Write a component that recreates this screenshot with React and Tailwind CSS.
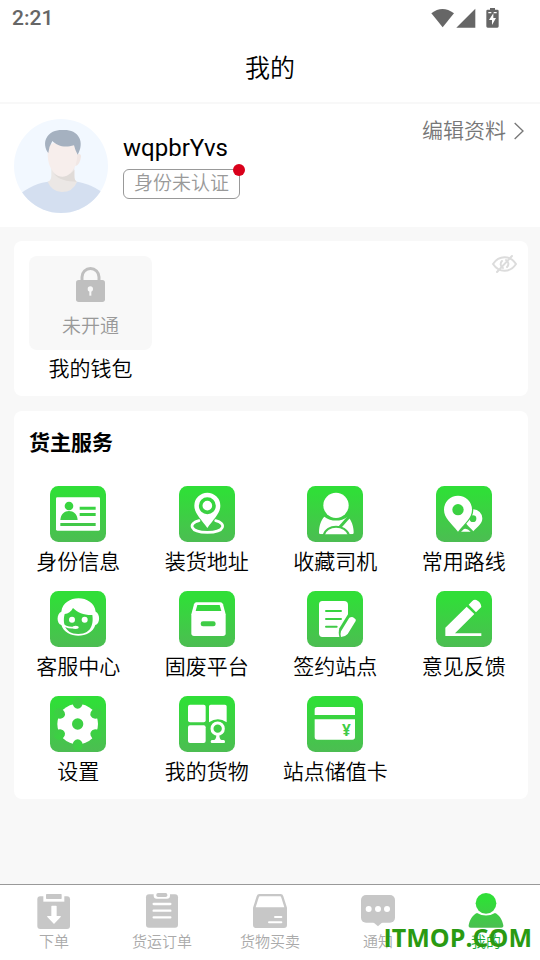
import { clsx } from "clsx";

const Tile = ({ children }) => (
  <svg viewBox="0 0 168 168" className="w-14 h-14" aria-hidden="true">
    <defs>
      <linearGradient id="green" gradientUnits="userSpaceOnUse" x1="0" y1="0" x2="0" y2="168">
        <stop offset="0.1" stopColor="#30de38" />
        <stop offset="1" stopColor="#4cbd52" />
      </linearGradient>
    </defs>
    <rect width="168" height="168" rx="25" fill="url(#green)" />
    {children}
  </svg>
);

const G = "url(#green)";

const IdCardIcon = () => (
  <Tile>
    <rect x="18" y="34" width="132" height="100" rx="4" fill="#fff" />
    <circle cx="57" cy="60" r="13" fill={G} />
    <path d="M31 102C32 84 44 75 57 75S82 84 83 102Z" fill={G} />
    <path d="M89 62h48v9H89zM89 81h48v9H89zM31 111h106v9H31z" fill={G} />
  </Tile>
);

const AddressIcon = () => (
  <Tile>
    <path d="M60 104C28 111 30 139 85 139S142 111 110 104" fill="none" stroke="#fff" strokeWidth="8" strokeLinecap="round" />
    <path d="M85 126C66 99 46 82 46 59a39 39 0 0 1 78 0C124 82 104 99 85 126Z" fill="#fff" />
    <circle cx="85" cy="59" r="20" fill="none" stroke={G} strokeWidth="11" />
  </Tile>
);

const DriverIcon = () => (
  <Tile>
    <path d="M36 140C36 119 42 102 52 92C72 107 101 108 122 92C134 102 140 122 140 140Q140 145 134 145H42Q36 145 36 140Z" fill="#fff" />
    <path d="M129 89L97 125" stroke={G} strokeWidth="9" />
    <path d="M50 148C58 114 116 114 126 148" fill="#fff" stroke={G} strokeWidth="6" />
    <path d="M30 145h115v10H30z" fill={G} />
    <circle cx="87" cy="58" r="42" fill={G} />
    <circle cx="87" cy="58" r="38" fill="#fff" />
  </Tile>
);

const RouteIcon = () => (
  <Tile>
    <path d="M112 136C100 121 85 114 85 97a27 27 0 0 1 54 0C139 114 125 121 112 136Z" fill="#fff" />
    <circle cx="111" cy="98" r="10" fill={G} />
    <path d="M66 142C46 113 20 98 20 71a46 46 0 0 1 92 0C112 98 88 113 66 142Z" fill={G} />
    <path d="M66 137C45 110 24 96 24 71a42 42 0 0 1 84 0C108 96 87 110 66 137Z" fill="#fff" />
    <circle cx="66" cy="71" r="17" fill={G} />
    <path d="M75 137L84 129Q93 126 104 137Z" fill="#fff" />
  </Tile>
);

const SupportIcon = () => (
  <Tile>
    <path d="M34 62C40 8 131 8 137 62C151 67 151 99 136 102C123 145 47 145 34 102C19 99 19 67 34 62Z" fill="#fff" />
    <path d="M69 51C83 65 103 73 127 72C130 91 129 129 85 129S38 91 44 69C55 69 63 62 69 51Z" fill={G} />
    <circle cx="66" cy="86" r="9" fill="#fff" />
    <circle cx="104" cy="86" r="9" fill="#fff" />
    <path d="M35 98C46 110 60 111 76 109" fill="none" stroke="#fff" strokeWidth="5" />
    <ellipse cx="77" cy="109" rx="9" ry="5" fill="#fff" />
  </Tile>
);

const BoxIcon = () => (
  <Tile>
    <path d="M52 34H124Q130 34 132 40L140 70V127Q140 135 132 135H45Q37 135 37 127V70L45 40Q47 34 52 34Z" fill="#fff" />
    <path d="M55 42H122L127 60H50Z" fill={G} />
    <rect x="65" y="91" width="45" height="15" rx="7" fill={G} />
  </Tile>
);

const SignIcon = () => (
  <Tile>
    <path d="M46 30H111Q123 30 123 42V138H46Q36 138 36 127V41Q36 30 46 30Z" fill="#fff" />
    <path d="M57 60h45M57 84h45M57 107h32" stroke={G} strokeWidth="6" strokeLinecap="round" />
    <path d="M124 68L97 112Q93 124 98 142H130L155 90Z" fill={G} />
    <path d="M131 79Q135 77 138 79L144 83Q148 86 146 90L122 129Q114 138 102 138Q99 130 102 121L126 82Q128 79 131 79Z" fill="#fff" />
  </Tile>
);

const FeedbackIcon = () => (
  <Tile>
    <path d="M28 110L92 47L115 69L57 127H136V135H28Z" fill="#fff" />
    <path d="M98 41L109 30Q114 25 121 27Q135 33 136 48L120 64Z" fill="#fff" />
  </Tile>
);

const GearIcon = () => (
  <Tile>
    <circle cx="83" cy="84" r="61" fill="#fff" />
    {[30, 90, 150, 210, 270, 330].map((deg) => (
      <ellipse key={deg} cx="146" cy="84" rx="17" ry="15" fill={G} transform={`rotate(${deg} 83 84)`} />
    ))}
    <circle cx="83" cy="84" r="17" fill={G} />
  </Tile>
);

const GoodsIcon = () => (
  <Tile>
    <rect x="27" y="26" width="53" height="53" rx="6" fill="#fff" />
    <rect x="27" y="88" width="53" height="53" rx="6" fill="#fff" />
    <path d="M95 26H138Q143 26 143 31V79Q117 60 90 79V31Q90 26 95 26Z" fill="#fff" />
    <circle cx="116" cy="98" r="17" fill="none" stroke="#fff" strokeWidth="9" />
    <path d="M112 116H121Q121 131 129 132H134Q138 132 138 137T134 141H99Q95 141 95 137T99 132H104Q112 131 112 116Z" fill="#fff" />
  </Tile>
);

const StoredCardIcon = () => (
  <Tile>
    <path d="M31 33H136Q144 33 144 41V57H23V41Q23 33 31 33Z" fill="#fff" />
    <path d="M23 70H144V123Q144 131 136 131H31Q23 131 23 123Z" fill="#fff" />
    <text x="118" y="120" textAnchor="middle" fontSize="46" fontWeight="700" fontFamily="Noto Sans" fill={G}>¥</text>
  </Tile>
);

const OrderIcon = () => (
  <svg viewBox="0 0 108 108" className="w-9 h-9" aria-hidden="true">
    <rect x="4" y="10" width="98" height="98" rx="9" fill="#c7c7c7" />
    <path d="M22 0H85V26H22Z" fill="#fff" />
    <rect x="30" y="3" width="47" height="15" rx="2" fill="#c7c7c7" />
    <path d="M46 40Q46 38 48 38H60Q62 38 62 40V69H73Q76 69 74 72L54 93L34 72Q32 69 35 69H46Z" fill="#fff" />
  </svg>
);

const FreightIcon = () => (
  <svg viewBox="0 0 108 108" className="w-9 h-9" aria-hidden="true">
    <rect x="6" y="4" width="96" height="100" rx="9" fill="#c7c7c7" />
    <path d="M29 0H78V8Q78 17 69 17H38Q29 17 29 8Z" fill="#fff" />
    <rect x="37" y="0" width="33" height="12" rx="5" fill="#c7c7c7" />
    <path d="M29 33h50M29 53h50M29 73h50" stroke="#fff" strokeWidth="7" strokeLinecap="round" />
  </svg>
);

const TradeIcon = () => (
  <svg viewBox="0 0 108 108" className="w-9 h-9" aria-hidden="true">
    <path d="M22 3H86Q92 3 94 10L105 44V96Q105 105 96 105H12Q3 105 3 96V44L14 10Q16 3 22 3Z" fill="#c7c7c7" />
    <path d="M24 10H84Q87 10 88 14L97 43H11L20 14Q21 10 24 10Z" fill="#fff" />
    <path d="M69 72h19M51 88h37" stroke="#fff" strokeWidth="6" strokeLinecap="round" />
  </svg>
);

const NoticeIcon = () => (
  <svg viewBox="0 0 108 108" className="w-9 h-9" aria-hidden="true">
    <rect x="3" y="6" width="102" height="83" rx="15" fill="#c7c7c7" />
    <path d="M38 86H69L54 100Z" fill="#c7c7c7" />
    <g fill="#fff">
      <circle cx="26" cy="48" r="9" />
      <circle cx="54" cy="48" r="9" />
      <circle cx="81" cy="48" r="9" />
    </g>
  </svg>
);

const MineIcon = () => (
  <svg viewBox="0 0 108 108" className="w-9 h-9" aria-hidden="true">
    <defs>
      <linearGradient id="mine" gradientUnits="userSpaceOnUse" x1="0" y1="0" x2="0" y2="108">
        <stop offset="0.2" stopColor="#30de38" />
        <stop offset="1" stopColor="#4cbd52" />
      </linearGradient>
    </defs>
    <circle cx="54" cy="31" r="31" fill="url(#mine)" />
    <path d="M27 60Q54 75 81 60C94 66 103 80 106 97Q107 104 100 104H8Q1 104 2 97C5 80 14 66 27 60Z" fill="url(#mine)" />
  </svg>
);

const Avatar = () => (
  <svg viewBox="0 0 282 282" className="w-[94px] h-[94px] shrink-0" role="img" aria-label="avatar">
    <defs>
      <clipPath id="face">
        <circle cx="141" cy="141" r="141" />
      </clipPath>
    </defs>
    <g clipPath="url(#face)">
      <rect width="282" height="282" fill="#f2f8ff" />
      <path d="M0 240C45 200 75 192 110 187H182C215 192 245 202 282 235V282H0Z" fill="#d4dff0" />
      <path d="M112 140H181V172Q181 184 189 189Q177 219 143 219Q113 217 101 188Q112 184 112 170Z" fill="#ebe7e5" />
      <path d="M118 162C140 180 165 172 181 152V172Q181 184 188 188C160 188 132 182 118 162Z" fill="#e0dbd8" />
      <path d="M184 108Q202 100 201 113Q198 137 184 142Z" fill="#f1e7e5" />
      <path d="M101 90C106 60 185 60 190 90V105C190 145 168 173 145 173S101 145 101 105Z" fill="#f7eeec" />
      <path d="M103 102C93 92 90 70 97 58C106 38 128 32 147 33C168 32 187 38 196 57C203 71 201 90 191 107Q184 96 180 79C150 88 130 80 115 66Q105 82 103 102Z" fill="#a5b1c0" />
    </g>
  </svg>
);

const LockIcon = () => (
  <svg viewBox="0 0 87 105" className="w-[29px] h-[35px]" aria-hidden="true">
    <path d="M18 45V30A25 25 0 0 1 69 30V45" fill="none" stroke="#bfbfbf" strokeWidth="9" />
    <rect x="0" y="39" width="87" height="66" rx="8" fill="#bfbfbf" />
    <circle cx="43" cy="66" r="8" fill="#f8f8f8" />
    <path d="M43 68v18" stroke="#f8f8f8" strokeWidth="6" />
  </svg>
);

const EyeOffIcon = () => (
  <svg viewBox="0 0 27 20" className="w-[27px] h-5" fill="none" stroke="#dcdcdc" strokeWidth="2" strokeLinecap="round" aria-hidden="true">
    <path d="M2 10C8 1 19 1 25 10C19 19 8 19 2 10Z" />
    <path d="M11 7C9 9 9 12 12 14M16 13C18 11 18 8 15 6" />
    <path d="M21 2L6 18" />
  </svg>
);

const services = [
  { label: "身份信息", icon: IdCardIcon },
  { label: "装货地址", icon: AddressIcon },
  { label: "收藏司机", icon: DriverIcon },
  { label: "常用路线", icon: RouteIcon },
  { label: "客服中心", icon: SupportIcon },
  { label: "固废平台", icon: BoxIcon },
  { label: "签约站点", icon: SignIcon },
  { label: "意见反馈", icon: FeedbackIcon },
  { label: "设置", icon: GearIcon },
  { label: "我的货物", icon: GoodsIcon },
  { label: "站点储值卡", icon: StoredCardIcon },
];

const tabs = [
  { label: "下单", icon: OrderIcon },
  { label: "货运订单", icon: FreightIcon },
  { label: "货物买卖", icon: TradeIcon },
  { label: "通知", icon: NoticeIcon },
  { label: "我的", icon: MineIcon, active: true },
];

const StatusBar = () => (
  <div className="flex items-center justify-between h-9 pl-3 pr-[41px] text-[#666]">
    <span className="text-[21px] leading-6 font-medium">2:21</span>
    <svg viewBox="0 0 204 60" className="w-[68px] h-5" fill="#666" aria-hidden="true">
      <path d="M1 16Q34 -10 69 16L35 58Z" />
      <path d="M76 59L133 2V59Z" />
      <path d="M177 0H192V5H199Q203 5 203 9V55Q203 59 199 59H170Q166 59 166 55V9Q166 5 170 5H177Z" />
      <path d="M172 14H181M188 14H197" stroke="#fff" strokeWidth="4" />
      <path d="M187 16L174 36H183V51L195 30H187Z" fill="#fff" />
    </svg>
  </div>
);

const App = () => {
  return (
    <div className="flex flex-col min-h-screen bg-[#f8f8f8] text-black font-[Roboto,'Noto_Sans_CJK_SC',sans-serif]">
      <header className="bg-white border-b-2 border-[#f8f8f8]">
        <StatusBar />
        <h1 className="h-[66px] pt-3 text-center text-[25px] leading-[42px] font-[350]">我的</h1>
      </header>

      <section className="flex items-start bg-white pt-[15px] pb-3.5 pl-3.5 pr-4">
        <Avatar />
        <div className="ml-[15px] pt-3.5">
          <p className="text-2xl leading-[30px]">wqpbrYvs</p>
          <button className="relative block h-[30px] mt-1.5 px-2.5 rounded-md border border-[#999] text-[19px] leading-7 font-[350] text-[#999]">
            身份未认证
            <span className="absolute -top-1.5 -right-1.5 w-3 h-3 rounded-full bg-[#d9001b]" />
          </button>
        </div>
        <a href="#profile" className="flex items-center gap-2 ml-auto text-[21px] leading-6 font-[350] text-[#777]">
          编辑资料
          <svg viewBox="0 0 30 54" className="w-2.5 h-[18px]" fill="none" stroke="#777" strokeWidth="4" aria-hidden="true">
            <path d="M2 3L27 27L2 51" />
          </svg>
        </a>
      </section>

      <main className="flex flex-col gap-[15px] mt-3.5 ml-3.5 mr-3">
        <section className="flex items-start justify-between rounded-lg bg-white pt-[15px] pb-3 pl-[15px] pr-2.5">
          <button className="flex flex-col items-center w-[123px]">
            <span className="flex flex-col items-center w-full h-[94px] pt-[11px] rounded-lg bg-[#f8f8f8]">
              <LockIcon />
              <span className="mt-2.5 text-[19px] leading-[30px] font-[350] text-[#999]">未开通</span>
            </span>
            <span className="mt-1 text-[21px] leading-[30px] font-[350]">我的钱包</span>
          </button>
          <button aria-label="显示金额" className="-mt-0.5">
            <EyeOffIcon />
          </button>
        </section>

        <section className="rounded-lg bg-white pt-4 pb-[11px]">
          <h2 className="pl-[15px] text-[21px] leading-8 font-bold">货主服务</h2>
          <div className="grid grid-cols-4 gap-y-[13px] mt-[27px]">
            {services.map(({ label, icon: Icon }) => (
              <button key={label} className="flex flex-col items-center whitespace-nowrap">
                <Icon />
                <span className="mt-1 text-[21px] leading-8 font-[350]">{label}</span>
              </button>
            ))}
          </div>
        </section>
      </main>

      <nav className="relative grid grid-cols-5 h-[76px] mt-auto pt-2 bg-white border-t border-[#999]">
        {tabs.map(({ label, icon: Icon, active }) => (
          <button
            key={label}
            className={clsx(
              "flex flex-col items-center text-[15px] leading-[26px] font-[350]",
              active ? "text-[#1aad3c]" : "text-[#aaa]"
            )}
          >
            <Icon />
            {label}
          </button>
        ))}
        <span className="absolute right-2 bottom-[7px] font-['Open_Sans'] font-bold text-[25px] leading-8 text-[#2a9a12] pointer-events-none">
          ITMOP.COM
        </span>
      </nav>
    </div>
  );
};

export default App;
